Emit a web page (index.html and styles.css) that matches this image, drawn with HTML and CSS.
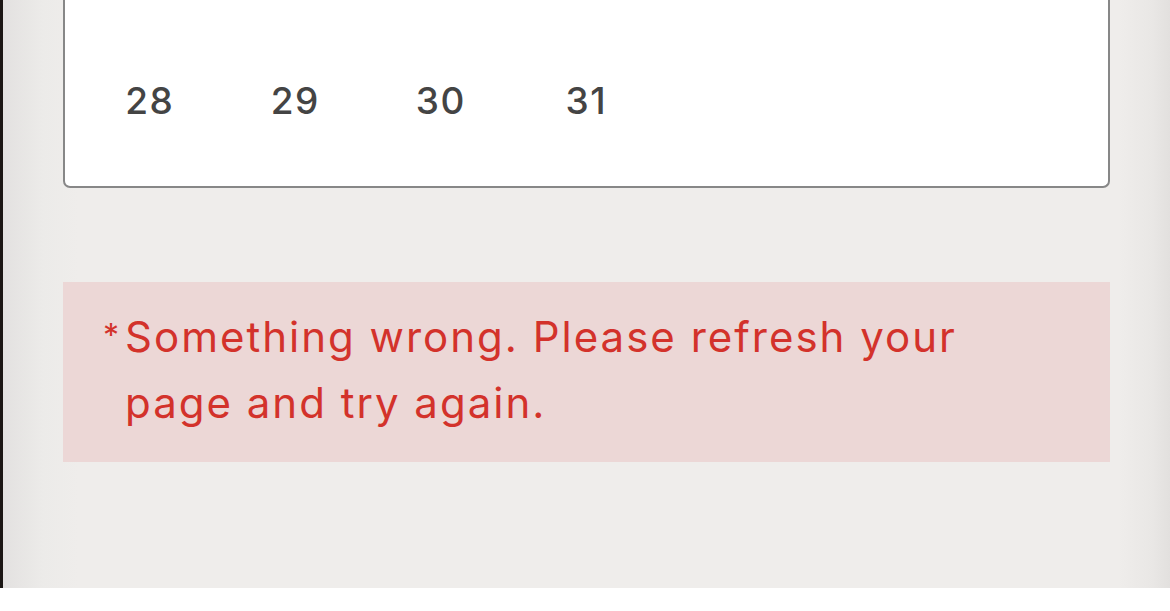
FILE: index.html
```html
<!DOCTYPE html>
<html lang="en">
<head>
  <meta charset="UTF-8" />
  <meta name="viewport" content="width=device-width, initial-scale=1.0"/>
  <title>Booking</title>
  <link rel="stylesheet" href="styles.css">
</head>
<body>

  <div class="panel">
    <div class="calendar">
      <div class="week">
        <span class="day">28</span>
        <span class="day">29</span>
        <span class="day">30</span>
        <span class="day">31</span>
        <span class="day"></span>
        <span class="day"></span>
        <span class="day"></span>
      </div>
    </div>

    <div class="error-box">
      <span class="star">*</span>
      <p>Something wrong. Please refresh your page and try again.</p>
    </div>
  </div>

</body>
</html>
```

FILE: styles.css
```css
* {
  margin: 0;
  padding: 0;
  box-sizing: border-box;
}

body {
  background: #ffffff;
  font-family: 'Inter', 'Noto Sans', sans-serif;
  overflow: hidden;
}

.panel {
  height: 588px;
  border-left: 3px solid #1b1614;
  background:
    linear-gradient(to right, #e3e1e0 0px, #ecebe9 40px, #efedeb 75px, #efedeb 1115px, #e9e7e5 1150px, #e2e0de 1167px);
  padding: 0 60px 0 60px;
}

.calendar {
  height: 188px;
  background: #ffffff;
  border: 2px solid #878787;
  border-top: none;
  border-radius: 0 0 7px 7px;
  padding: 76px 0 0 12px;
}

.week {
  display: grid;
  grid-template-columns: repeat(7, 145.5px);
}

.day {
  text-align: center;
  font-size: 37px;
  font-weight: 500;
  letter-spacing: 1.5px;
  color: #444444;
  line-height: 50px;
}

.error-box {
  margin-top: 94px;
  height: 180px;
  background: #ecd7d6;
  display: flex;
  padding: 32px 40px 0 40px;
  color: #d3322b;
}

.star {
  font-size: 32px;
  line-height: 44px;
  width: 22px;
}

.error-box p {
  font-size: 42px;
  letter-spacing: 2px;
  line-height: 66px;
  max-width: 900px;
  margin-top: -10px;
}
```
